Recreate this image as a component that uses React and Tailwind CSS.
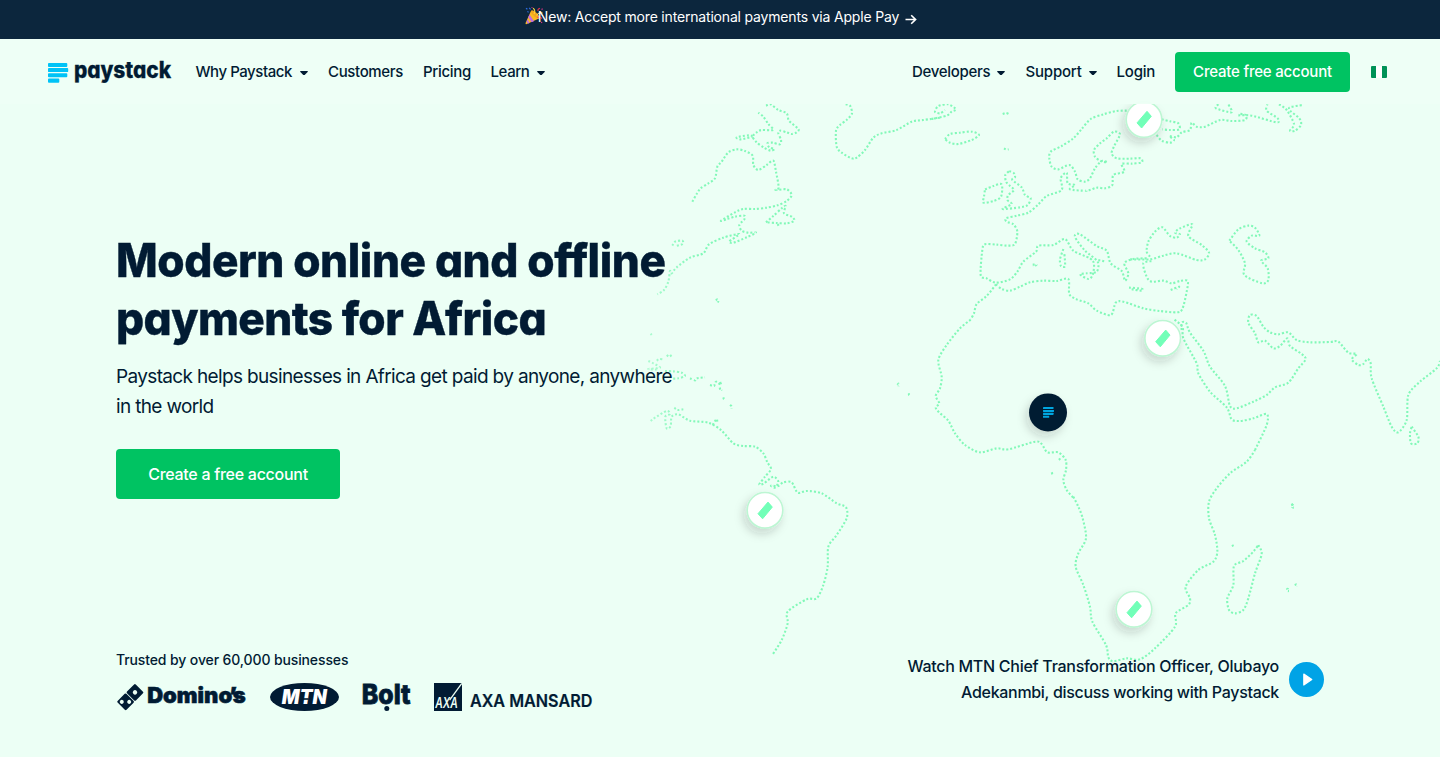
import React from "react";

// Each region lists coastlines in local units (three per pixel) with its own origin.
const REGIONS = [
  {
    at: [640, 100],
    lines: [
      [157,305,170,282,182,265,205,250,225,235,232,200,245,185,265,157,290,148,315,153,338,167,340,195,355,210,380,195,400,182,408,215,416,262,407,270,440,268,455,285,440,303,412,316,380,323,345,327,310,327,285,337,243,362,262,357,285,350,313,347,313,358,298,375,305,392,325,398,348,398,320,412,280,428,268,424,298,402,250,413,207,433,190,460,150,473,110,502,95,520,90,513,85,545,72,570,52,583],
      [378,367,400,348,425,325,437,318,432,340,455,350,463,362,440,370,410,369,378,367],
      [413,372,418,382],
      [378,17,392,13,415,30,440,40,447,62,475,87,470,97,455,102,440,97,420,92,415,100,423,120,420,133,398,128,382,130,388,142,403,147,392,152,372,143,350,127,338,110,350,97,365,90,400,90,385,72,370,50,355,38],
      [338,108,325,106,290,112,303,118,338,110],
      [97,437,105,425,127,422,128,432,108,438],
      [227,600,233,598,233,604,237,606],
      [617,13,630,17,636,40,622,58,600,75,588,92,590,140,605,158,635,175,650,173,675,150,700,113,725,100,770,90,815,65,850,60,900,53],
    ],
  },
  {
    at: [930, 100],
    lines: [
      [5,57,50,47,65,35,78,28,55,13,25,18,15,35,30,40,45,30],
      [45,117,60,102,90,98,125,95,147,105,125,120,85,132,60,128,45,117],
      [218,42,228,39,236,42],
      [222,145,229,149,236,148],
      [165,268,190,258,215,253,213,290,190,303,160,308,162,290,165,268],
      [238,213,252,220,255,232,247,240,275,262,285,285,302,295,293,315,270,322,218,327,245,312,232,300,235,285,252,270,240,258,228,245,226,225,238,213],
      [590,32,560,33,520,43,482,57,455,87,430,115,395,138,362,155,358,175,365,200,385,208,418,195,435,215,443,238,465,245,480,235,495,205,515,183,532,187,512,183,495,170,492,150,510,130,530,115,552,95,570,103,553,137,545,160,560,175,600,176,632,175,635,187,605,191,575,192,583,215,550,225,547,255,525,265,500,263,470,272,420,268,435,255,413,250,410,218,392,235,395,270,350,288,325,313,295,338,260,347,228,355,230,365,250,373,262,395,255,432,235,437,200,434,165,433,157,450,152,525,170,535,198,548,240,538,262,515,280,485,318,455,325,437,370,435,405,417,430,452,480,475,492,492,488,525,475,537,450,523,470,520,500,515,503,485,465,452,440,420,435,405,450,403,500,438,530,452,542,490,575,513,585,542,595,520,583,490,610,477,655,475],
      [505,480,527,485],
      [400,447,390,478,393,498,405,498,403,460],
      [308,494,320,494,310,501],
      [597,563,635,566,635,572,605,568],
      [198,553,215,567,240,572,270,560,300,547,340,542,380,543,415,537,418,582,440,598,475,610,500,632,543,645,557,608,580,605,640,625,690,633,740,637,757,627,770,575,773,543,750,543,725,550,700,542,665,545,650,530,640,490,670,483],
      [198,553,170,588,140,612,132,640,122,658],
    ],
  },
  {
    at: [1130, 100],
    lines: [
      [122,570,147,560,140,568],
      [95,58,120,64,145,70,148,88,120,90,97,88],
      [80,105,95,122,120,128,132,120,118,108,140,112,155,97,180,90,185,68,200,80,225,80,270,60,305,63,345,60,348,45,325,41],
      [325,46,365,47,440,67,443,55,410,32,412,13],
      [265,13,258,25,305,37,295,13],
      [447,13,470,30,492,72,480,92,495,92,513,75,508,55,480,32,480,22,517,15],
      [60,470,50,455,55,425,75,395,97,382,120,408,140,413,150,403,135,398,150,385,187,373,175,408,215,435,237,458,225,478,200,480,140,460,100,467,60,478,0,478],
      [298,422,325,388,355,377,375,383,388,407,365,407,350,425,375,445,405,457,415,475,393,482,413,505,415,540,397,550,343,525,345,490,325,450,298,422],
    ],
  },
  {
    at: [900, 280],
    lines: [
      [212,119,180,145,140,195,115,240,125,290,120,325,107,348,118,370,107,382,117,397,145,422,165,460,195,495,240,517,290,505,325,508,405,485,425,492,442,517,475,517,497,540,498,570,490,600,500,630,522,655],
      [27,340,27,345,32,348],
      [-8,315,-4,311,-4,319],
    ],
  },
  {
    at: [1030, 450],
    lines: [
      [130,140,145,170,158,205,168,265,145,310,137,350,160,405,180,470,187,515,228,585,235,622,250,634,290,625,330,628,375,595,435,530,437,490,475,465,480,445,467,410,505,360,550,335,562,305,555,255,537,205,537,155,560,115,600,70,650,35,675,0],
      [685,285,695,312,675,370,655,445,640,480,615,490,597,480,592,445,610,405,612,348,640,333,670,305,685,285],
      [607,284,610,290,615,292],
      [784,164,790,166,787,172,792,173],
      [769,417,774,417,773,423,777,423],
      [794,405,800,403,802,409],
      [65,67,68,73,73,71],
      [87,25,91,30,94,29],
    ],
  },
  {
    at: [1130, 300],
    lines: [
      [375,450,410,375,410,342,370,355,330,363,305,358,290,322,240,275,205,220,200,190,160,115,158,82,133,58],
      [155,90,155,68,168,68,180,98,220,152,240,200,285,258,300,318,320,325,370,305,410,285,435,262,475,248,505,205,527,178,515,162,480,138,472,115,450,138,430,145,405,122,385,127,375,100,355,68,360,45,380,48,400,80,420,97,445,103,475,97,500,120,540,127,600,126,625,125,655,158,680,162,665,178,685,195,700,192,712,177,722,190,725,235,760,320,785,380,805,397,830,360,835,285,870,245,920,205,930,183],
      [845,380,865,410,862,430,843,430,840,400,845,380],
      [485,611,488,616,488,622],
    ],
  },
  {
    at: [640, 300],
    lines: [
      [32,363,45,353,80,333,90,342,76,350,80,385,92,378,95,350,115,343,150,362,205,368,245,392,280,430,310,438,345,440,370,460,382,487,393,507,375,530,358,553,372,550,400,530,415,545,405,563,393,557,415,558,430,547,455,547,473,578,500,573,545,580,590,610,618,622,620,655,590,705,565,740,563,800,550,855,530,895,500,898,443,935,443,970,425,1020,397,1065],
      [218,375,230,357,232,370],
      [103,323,112,330,130,328],
      [270,315,275,319,275,326],
      [250,292,252,298,257,298],
      [237,267,244,265,246,271],
      [210,255,222,258,228,245,243,255,240,245],
      [150,235,165,241,170,235,195,232],
      [25,183,40,190,60,203,25,207,50,209],
      [50,182,58,177,68,178],
      [80,165,87,170,95,165],
      [75,213,100,214,125,218,135,228,115,235,95,236],
      [32,101,35,105],
    ],
  },
];

const f = (n) => n.toFixed(2);

function smoothPath([ox, oy], flat) {
  const p = [];
  for (let i = 0; i < flat.length; i += 2) p.push([ox + flat[i] / 3, oy + flat[i + 1] / 3]);
  let d = `M${f(p[0][0])} ${f(p[0][1])}`;
  for (let i = 0; i < p.length - 1; i++) {
    const a = p[i - 1] || p[i];
    const b = p[i];
    const c = p[i + 1];
    const e = p[i + 2] || c;
    d += `C${f(b[0] + (c[0] - a[0]) / 7)} ${f(b[1] + (c[1] - a[1]) / 7)} ${f(c[0] - (e[0] - b[0]) / 7)} ${f(c[1] - (e[1] - b[1]) / 7)} ${f(c[0])} ${f(c[1])}`;
  }
  return d;
}

const PINS = [
  [1144, 119.5],
  [1162.7, 338.3],
  [765, 510.3],
  [1134, 609.3],
];

function WorldMap() {
  return (
    <svg className="absolute left-0 top-0 h-[757px] w-[1440px]" viewBox="0 0 1440 757" fill="none" aria-hidden="true">
      <defs>
        <filter id="pinShadow" x="-60%" y="-60%" width="220%" height="220%">
          <feDropShadow dx="-3" dy="5" stdDeviation="5" floodColor="#1a2a22" floodOpacity="0.18" />
        </filter>
        <linearGradient id="fade" x1="645" x2="700" y1="0" y2="0" gradientUnits="userSpaceOnUse">
          <stop offset="0" stopColor="#82f8b8" stopOpacity="0.6" />
          <stop offset="1" stopColor="#82f8b8" />
        </linearGradient>
      </defs>
      <g stroke="url(#fade)" strokeWidth="2.1" strokeDasharray="2 2">
        {REGIONS.map((r, i) => r.lines.map((l, j) => <path key={`${i}-${j}`} d={smoothPath(r.at, l)} />))}
      </g>
      {PINS.map(([x, y]) => (
        <g key={x} transform={`translate(${x} ${y})`}>
          <circle r="17.8" fill="#fff" stroke="#bdf6d3" strokeWidth="1.6" filter="url(#pinShadow)" />
          <path d="M3 -8.2L7.3 -3.2L-2.4 8.5L-7 3.4Z" fill="#72ffb8" stroke="#72ffb8" strokeWidth="1" strokeLinejoin="round" />
        </g>
      ))}
      <g transform="translate(1048 412.4)">
        <circle r="19" fill="#011b33" filter="url(#pinShadow)" />
        <g fill="#00a6e0">
          <rect x="-5" y="-5.4" width="10.5" height="2.1" rx=".4" />
          <rect x="-5" y="-2.5" width="11" height="2.1" rx=".4" />
          <rect x="-5" y=".4" width="10.5" height="2.1" rx=".4" />
          <rect x="-5" y="3.3" width="6.2" height="2.1" rx=".4" />
        </g>
      </g>
    </svg>
  );
}

function PartyPopper() {
  return (
    <svg className="h-[18px] w-[19px] shrink-0" viewBox="0 0 19 18" aria-hidden="true">
      <path d="M6.2 3.5L14 11.5L1.2 17.2Q.2 17.2.6 16Z" fill="#f9b822" />
      <path d="M4.5 7.5L9 14.2L6.6 15.2L3.2 10.2ZM2.5 12.2L4.6 16L2.8 16.8L1.6 14.2Z" fill="#c06be0" />
      <ellipse cx="10.2" cy="7.4" rx="2" ry="5.4" transform="rotate(-45 10.2 7.4)" fill="#f2a51e" />
      <path d="M9 7Q11 4 8.2 1.2M11.5 8.5Q13.5 5 17.5 6" stroke="#ffd53d" strokeWidth="1.1" fill="none" />
      <path d="M13 4Q12.5 2 15 1.3M12.5 10.5Q15 9.5 17 11.5" stroke="#e3344f" strokeWidth="1.1" fill="none" />
      <path d="M1 1.2l1.4 1M4.2 .8l1.4 1.6M2.5 4.4l1 1" stroke="#2f6fe4" strokeWidth="1.2" />
      <path d="M16.5 2.6l1.2-.8M16 15.6l1.2-.4M6.8 1l.5-.8" stroke="#d53386" strokeWidth="1.2" />
    </svg>
  );
}

function Caret({ className = "" }) {
  return (
    <svg className={`mt-px h-[4.5px] w-2 ${className}`} viewBox="0 0 8 4.5" aria-hidden="true">
      <path d="M.6 0H7.4Q8.2.2 7.6.9L4.5 4.2Q4 4.6 3.5 4.2L.4.9Q-.2.2.6 0Z" fill="#011b33" />
    </svg>
  );
}

function PaystackLogo() {
  return (
    <svg className="h-8 w-[128px] shrink-0 overflow-visible" viewBox="0 0 128 32" aria-label="paystack">
      <g fill="#00c3f7">
        <rect y="7" width="19.3" height="4" rx=".9" />
        <rect y="12.1" width="20.2" height="4" rx=".9" />
        <rect y="17.2" width="19.3" height="4" rx=".9" />
        <rect y="22.5" width="11.3" height="4.2" rx=".9" />
      </g>
      <text x="25.9" y="21.6" fontSize="22.4" textLength="97.2" lengthAdjust="spacingAndGlyphs" stroke="#011b33" strokeWidth=".3" className="fill-[#011b33] font-extrabold [font-feature-settings:'cv11']">
        paystack
      </text>
    </svg>
  );
}

function ClientLogos() {
  return (
    <div className="mt-[13px] flex items-start fill-[#011b33]">
      <svg className="mr-[22px] h-7 w-[132px] overflow-visible" viewBox="0 0 132 28" aria-label="Domino’s">
        <g transform="translate(14.4 14) rotate(-45)">
          <rect x="-13" y="-6.3" width="12.4" height="12.6" rx="1.2" />
          <rect x=".3" y="-6.3" width="12.4" height="12.6" rx="1.2" />
          <circle cx="-9.6" cy="-2.6" r="2" fill="#ecfff5" />
          <circle cx="-4.3" cy="2.6" r="2" fill="#ecfff5" />
          <circle cx="6.5" cy="0" r="2.2" fill="#ecfff5" />
        </g>
        <text x="31.2" y="20" fontSize="22" stroke="#011b33" strokeWidth=".6" className="font-black">
          Domino<tspan dx="-2.6">’</tspan><tspan dx="-2.8">s</tspan>
        </text>
      </svg>
      <svg className="mr-6 h-7 w-[69px]" viewBox="0 0 69 28" aria-label="MTN">
        <ellipse cx="34.5" cy="14" rx="34.5" ry="14" />
        <text x="11.8" y="21.1" fontSize="19.5" textLength="45" lengthAdjust="spacingAndGlyphs" className="fill-white font-black italic">
          MTN
        </text>
        <path d="M31.5 15.2h7v1.6h-7z" />
      </svg>
      <svg className="mr-6 h-7 w-[47px] overflow-visible" viewBox="0 0 47 28" aria-label="Bolt">
        <text x="-1.2" y="20.8" fontSize="27.5" textLength="48.8" lengthAdjust="spacingAndGlyphs" stroke="#011b33" strokeWidth=".8" className="font-extrabold">
          Bolt
        </text>
        <circle cx="23.8" cy="25.6" r="2.5" />
      </svg>
      <svg className="h-7 w-[164px] overflow-visible" viewBox="0 0 164 28" aria-label="AXA Mansard">
        <rect width="28" height="28" />
        <path d="M27.8 .3L15.6 17.2" stroke="#ecfff5" strokeWidth="1.3" />
        <text x="1.2" y="25.2" fontSize="14" textLength="22.5" lengthAdjust="spacingAndGlyphs" className="fill-[#ecfff5] font-semibold italic">
          AXA
        </text>
        <text x="36" y="24" fontSize="17.5" textLength="122.4" lengthAdjust="spacingAndGlyphs" stroke="#011b33" strokeWidth=".2" className="font-semibold">
          AXA MANSARD
        </text>
      </svg>
    </div>
  );
}

export default function App() {
  return (
    <div className="relative flex h-[757px] w-[1440px] flex-col overflow-hidden bg-[#ecfff5] font-['Inter',sans-serif] text-[#011b33]">
      <WorldMap />
      <div className="relative flex h-[39px] shrink-0 items-start justify-center bg-[#0c263d] pl-[2px] pt-[7px] text-sm text-white">
        <PartyPopper />
        <span className="-ml-[6px] whitespace-nowrap leading-5 tracking-[-0.18px]">New: Accept more international payments via Apple Pay</span>
        <svg className="ml-[6px] mt-[7px] h-[11px] w-[12px]" viewBox="0 0 12 11" fill="none" stroke="#fff" strokeWidth="1.6" aria-hidden="true">
          <path d="M.5 5.5H10.5M6.2 1.2L10.6 5.5L6.2 9.8" />
        </svg>
      </div>

      <header className="relative flex h-[65px] shrink-0 items-center justify-between bg-[#eefff6]/95 pl-12 pr-[53px] text-[15px] font-medium">
        <div className="flex items-center">
          <PaystackLogo />
          <nav className="ml-[19.5px] flex items-center whitespace-nowrap pt-[2px]">
            <a className="flex w-[132.5px] items-center tracking-[-0.45px]">Why Paystack<Caret className="ml-[8px]" /></a>
            <a className="w-[95px] tracking-[-0.35px]">Customers</a>
            <a className="w-[67.5px] tracking-[-0.3px]">Pricing</a>
            <a className="flex items-center tracking-[-0.4px]">Learn<Caret className="ml-[8px]" /></a>
          </nav>
        </div>
        <div className="flex items-center whitespace-nowrap">
          <a className="flex w-[113.5px] items-center pt-[2px] tracking-[-0.3px]">Developers<Caret className="ml-[7px]" /></a>
          <a className="flex w-[91px] items-center pt-[2px] tracking-[-0.2px]">Support<Caret className="ml-[7px]" /></a>
          <a className="w-[58.5px] pt-[2px] tracking-[-0.2px]">Login</a>
          <a className="flex h-10 w-[175px] items-center justify-center rounded bg-[#00c362] pt-[2px] tracking-[-0.2px] text-white">Create free account</a>
          <span className="ml-[21px] flex h-3 w-4 overflow-hidden rounded-[1px] bg-white">
            <span className="w-[5.3px] bg-[#009257]" />
            <span className="flex-1" />
            <span className="w-[5.3px] bg-[#009257]" />
          </span>
        </div>
      </header>

      <main className="relative flex flex-1 flex-col justify-between pb-[46px] pl-[116px] pr-[116px] pt-[127px]">
        <section>
          <h1 className="w-[620px] origin-left scale-x-[0.95] whitespace-nowrap text-[46.5px] font-extrabold leading-[58px] tracking-[-0.45px] [-webkit-text-stroke:0.4px_#011b33] [font-feature-settings:'cv11']">
            Modern online and offline
            <br />
            <span className="tracking-[-0.6px]">payments for Africa</span>
          </h1>
          <p className="mt-[15px] whitespace-nowrap text-[19px] leading-[30px] tracking-[-0.65px]">
            Paystack helps businesses in Africa get paid by anyone, anywhere
            <br />
            in the world
          </p>
          <a className="mt-[27px] flex h-[50px] w-[224px] items-center justify-center rounded bg-[#00c362] text-base font-medium tracking-[-0.28px] text-white">
            Create a free account
          </a>
        </section>

        <section className="flex items-end justify-between">
          <div>
            <p className="text-sm font-medium leading-5 tracking-[-0.12px]">Trusted by over 60,000 businesses</p>
            <ClientLogos />
          </div>
          <div className="mb-[6px] flex items-center gap-[10px]">
            <p className="whitespace-nowrap text-right text-base font-medium leading-[26px] tracking-[-0.27px]">
              Watch MTN Chief Transformation Officer, Olubayo
              <br />
              <span className="tracking-[-0.31px]">Adekanmbi, discuss working with Paystack</span>
            </p>
            <span className="flex size-[35px] items-center justify-center rounded-full bg-[#00a3e6]">
              <svg className="ml-[3px] h-[13px] w-[10px]" viewBox="0 0 10 13" aria-hidden="true">
                <path d="M.8 1L8.8 6.5L.8 12Z" fill="#fff" stroke="#fff" strokeWidth="1.2" strokeLinejoin="round" />
              </svg>
            </span>
          </div>
        </section>
      </main>
    </div>
  );
}
